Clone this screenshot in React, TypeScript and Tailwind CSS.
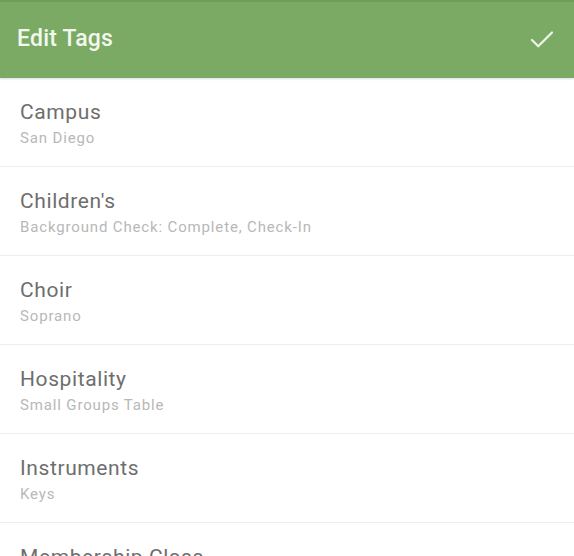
import { Check } from 'lucide-react'

const tags = [
  { name: 'Campus', values: 'San Diego' },
  { name: "Children's", values: 'Background Check: Complete, Check-In' },
  { name: 'Choir', values: 'Soprano' },
  { name: 'Hospitality', values: 'Small Groups Table' },
  { name: 'Instruments', values: 'Keys' },
  { name: 'Membership Class', values: 'Completed' },
]

export default function App() {
  return (
    <div
      className="w-[574px] h-[556px] overflow-hidden bg-white"
      style={{ fontFamily: 'Roboto, "Noto Sans", sans-serif' }}
    >
      {/* Toolbar */}
      <header className="h-[78px] bg-[#7aaa64] border-t-2 border-[#6f9d5a] flex items-center justify-between pl-[17px] pr-[17px] shadow-[0_1px_2px_rgba(0,0,0,0.15)] relative z-10">
        <h1 className="text-[23px] font-medium text-[#f3f8ee] tracking-[0.2px] pb-[1px]">Edit Tags</h1>
        <Check className="w-[30px] h-[30px] text-[#eef5e8]" strokeWidth={1.8} />
      </header>

      {/* Tag list */}
      <ul>
        {tags.map((t) => (
          <li
            key={t.name}
            className="h-[89px] border-b border-[#eeeeee] px-5 pt-[3px] flex flex-col justify-center"
          >
            <div className="text-[21px] leading-[26px] tracking-[0.6px] text-[#6e6e6e] whitespace-nowrap">
              {t.name}
            </div>
            <div className="text-[15px] leading-5 mt-[3px] tracking-[0.85px] text-[#b8b8b8] whitespace-nowrap">
              {t.values}
            </div>
          </li>
        ))}
      </ul>
    </div>
  )
}
